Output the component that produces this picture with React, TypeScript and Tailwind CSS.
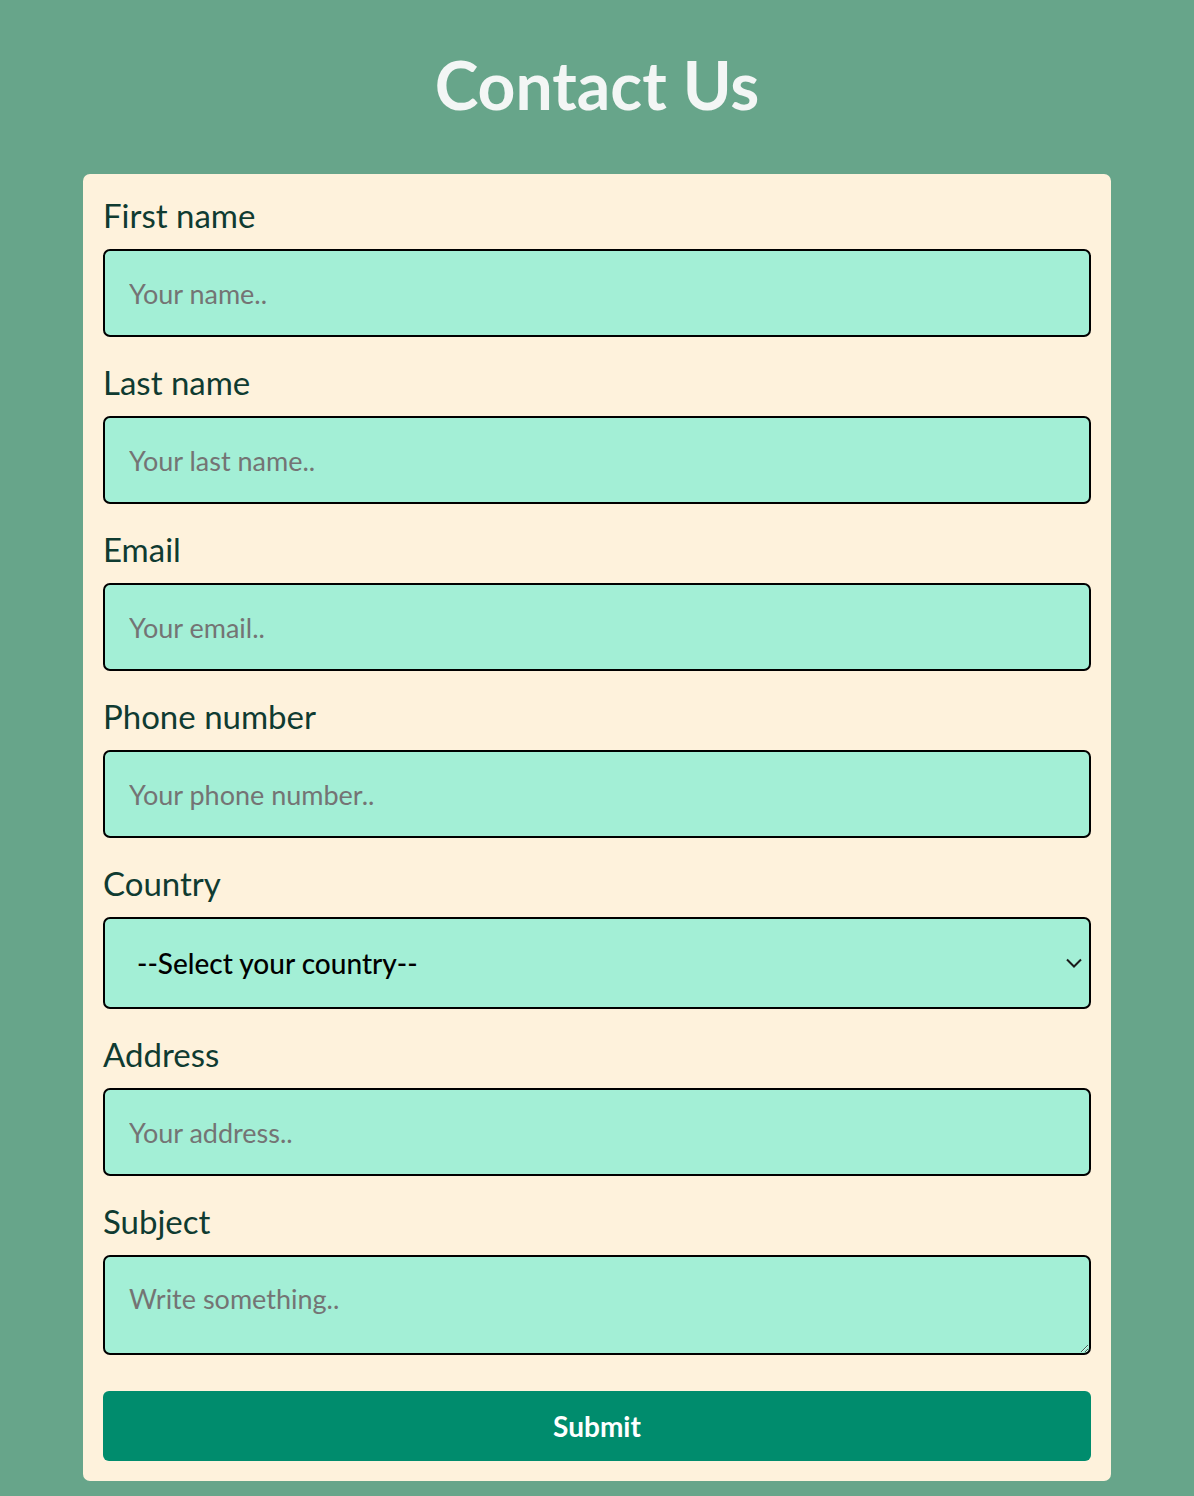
import React from 'react';

const font = { fontFamily: 'Lato, "Noto Sans", sans-serif' };

const Field: React.FC<{ label: string; placeholder: string }> = ({ label, placeholder }) => (
  <div className="mb-[24px]">
    <label className="block text-[33px] leading-[42px] text-[#0f3b31] mb-[13px]">{label}</label>
    <input
      type="text"
      placeholder={placeholder}
      className="block w-full h-[88px] bg-[#a3efd6] border-2 border-black rounded-[7px] px-[24px] text-[27px] text-black placeholder:text-[#747474] outline-none"
    />
  </div>
);

export default function App() {
  return (
    <div className="min-h-[1496px] bg-[#67a58a] pt-[46px] pb-[16px]" style={font}>
      <h1 className="text-center text-[66px] leading-[78px] font-bold text-[#f3f6f5] mb-[50px]">Contact Us</h1>

      <form className="mx-auto w-[1028px] bg-[#fef2dc] rounded-[7px] px-[20px] pt-[20px] pb-[20px]">
        <Field label="First name" placeholder="Your name.." />
        <Field label="Last name" placeholder="Your last name.." />
        <Field label="Email" placeholder="Your email.." />
        <Field label="Phone number" placeholder="Your phone number.." />

        <div className="mb-[24px]">
          <label className="block text-[33px] leading-[42px] text-[#0f3b31] mb-[13px]">Country</label>
          <div className="relative">
            <select className="block w-full h-[92px] appearance-none bg-[#a3efd6] border-2 border-black rounded-[7px] pl-[32px] pr-[48px] text-[28px] font-medium text-black outline-none">
              <option>--Select your country--</option>
            </select>
            <svg className="absolute right-[7px] top-1/2 -translate-y-1/2 pointer-events-none" width="20" height="20" viewBox="0 0 20 20" fill="none">
              <path d="M3 6.5l7 7 7-7" stroke="#1a1a1a" strokeWidth="2" />
            </svg>
          </div>
        </div>

        <Field label="Address" placeholder="Your address.." />

        <div className="mb-[36px]">
          <label className="block text-[33px] leading-[42px] text-[#0f3b31] mb-[13px]">Subject</label>
          <textarea
            placeholder="Write something.."
            className="block w-full h-[100px] bg-[#a3efd6] border-2 border-black rounded-[7px] px-[24px] pt-[26px] text-[27px] leading-[32px] text-black placeholder:text-[#747474] outline-none"
          />
        </div>

        <button
          type="button"
          className="block w-full h-[70px] bg-[#008c6d] rounded-[6px] text-white text-[28px] font-bold"
        >
          Submit
        </button>
      </form>
    </div>
  );
}
